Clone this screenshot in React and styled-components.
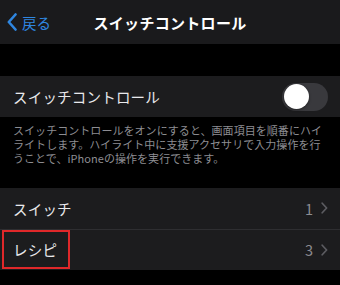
import React from "react";
import styled, { createGlobalStyle } from "styled-components";

const Global = createGlobalStyle`
  html, body {
    margin: 0;
    padding: 0;
    background: #000;
  }
  body {
    font-family: "Noto Sans CJK JP", "Noto Sans", sans-serif;
    -webkit-font-smoothing: antialiased;
  }
`;

const Page = styled.div`
  width: 340px;
  height: 285px;
  background: #000;
  overflow: hidden;
`;

const NavBar = styled.div`
  height: 44px;
  background: #1a1a1c;
  display: grid;
  grid-template-columns: 1fr auto 1fr;
  align-items: center;
`;

const Back = styled.div`
  display: flex;
  align-items: center;
  gap: 5px;
  padding-left: 7px;
  color: #2f86e0;
  font-size: 14.5px;
`;

const Title = styled.div`
  color: #fff;
  font-size: 15px;
  font-weight: 700;
  letter-spacing: 0.3px;
`;

const Gap = styled.div`
  height: ${(p) => p.h}px;
`;

const Group = styled.div`
  background: #1c1c1e;
`;

const Row = styled.div`
  height: ${(p) => p.h || 41}px;
  display: flex;
  align-items: center;
  justify-content: space-between;
  padding: 0 12px 0 13px;
  box-sizing: border-box;
  border-top: ${(p) => (p.divider ? "1px solid #2e2e31" : "none")};
  position: relative;
`;

const Label = styled.span`
  color: #e9e9ec;
  font-size: 14.5px;
  letter-spacing: 0.2px;
`;

const Toggle = styled.div`
  width: 46px;
  height: 28px;
  border-radius: 14px;
  background: #39393d;
  padding: 1.5px;
  box-sizing: border-box;
  margin-right: 0;
`;

const Knob = styled.div`
  width: 25px;
  height: 25px;
  border-radius: 50%;
  background: #fff;
  box-shadow: 0 1px 3px rgba(0, 0, 0, 0.4);
`;

const Footer = styled.p`
  margin: 0;
  padding: 6px 13px 0 13px;
  color: #8d8d92;
  font-size: 11px;
  line-height: 14.2px;
  letter-spacing: 0.05px;
`;

const Detail = styled.div`
  display: flex;
  align-items: center;
  gap: 8px;
  color: #8d8d92;
  font-size: 14.5px;
`;

const Highlight = styled.div`
  position: absolute;
  left: 2px;
  top: 0px;
  width: 68px;
  height: 39px;
  border: 2px solid #e0282a;
  box-sizing: border-box;
`;

const BackChevron = () => (
  <svg width="10" height="18" viewBox="0 0 10 18">
    <polyline
      points="8.5,1.5 1.8,9 8.5,16.5"
      fill="none"
      stroke="#2f86e0"
      strokeWidth="2.6"
      strokeLinecap="round"
      strokeLinejoin="round"
    />
  </svg>
);

const Chevron = () => (
  <svg width="7" height="12" viewBox="0 0 7 12">
    <polyline
      points="1.2,1.2 5.6,6 1.2,10.8"
      fill="none"
      stroke="#5c5c61"
      strokeWidth="1.7"
      strokeLinecap="round"
      strokeLinejoin="round"
    />
  </svg>
);

export default function App() {
  return (
    <Page>
      <Global />
      <NavBar>
        <Back>
          <BackChevron />
          <span>戻る</span>
        </Back>
        <Title>スイッチコントロール</Title>
        <div />
      </NavBar>
      <Gap h={32} />
      <Group>
        <Row>
          <Label>スイッチコントロール</Label>
          <Toggle>
            <Knob />
          </Toggle>
        </Row>
      </Group>
      <Footer>
        スイッチコントロールをオンにすると、画面項目を順番にハイライトします。ハイライト中に支援アクセサリで入力操作を行うことで、iPhoneの操作を実行できます。
      </Footer>
      <Gap h={22} />
      <Group>
        <Row>
          <Label>スイッチ</Label>
          <Detail>
            1 <Chevron />
          </Detail>
        </Row>
        <Row divider h={41}>
          <Label>レシピ</Label>
          <Detail>
            3 <Chevron />
          </Detail>
          <Highlight />
        </Row>
      </Group>
    </Page>
  );
}
